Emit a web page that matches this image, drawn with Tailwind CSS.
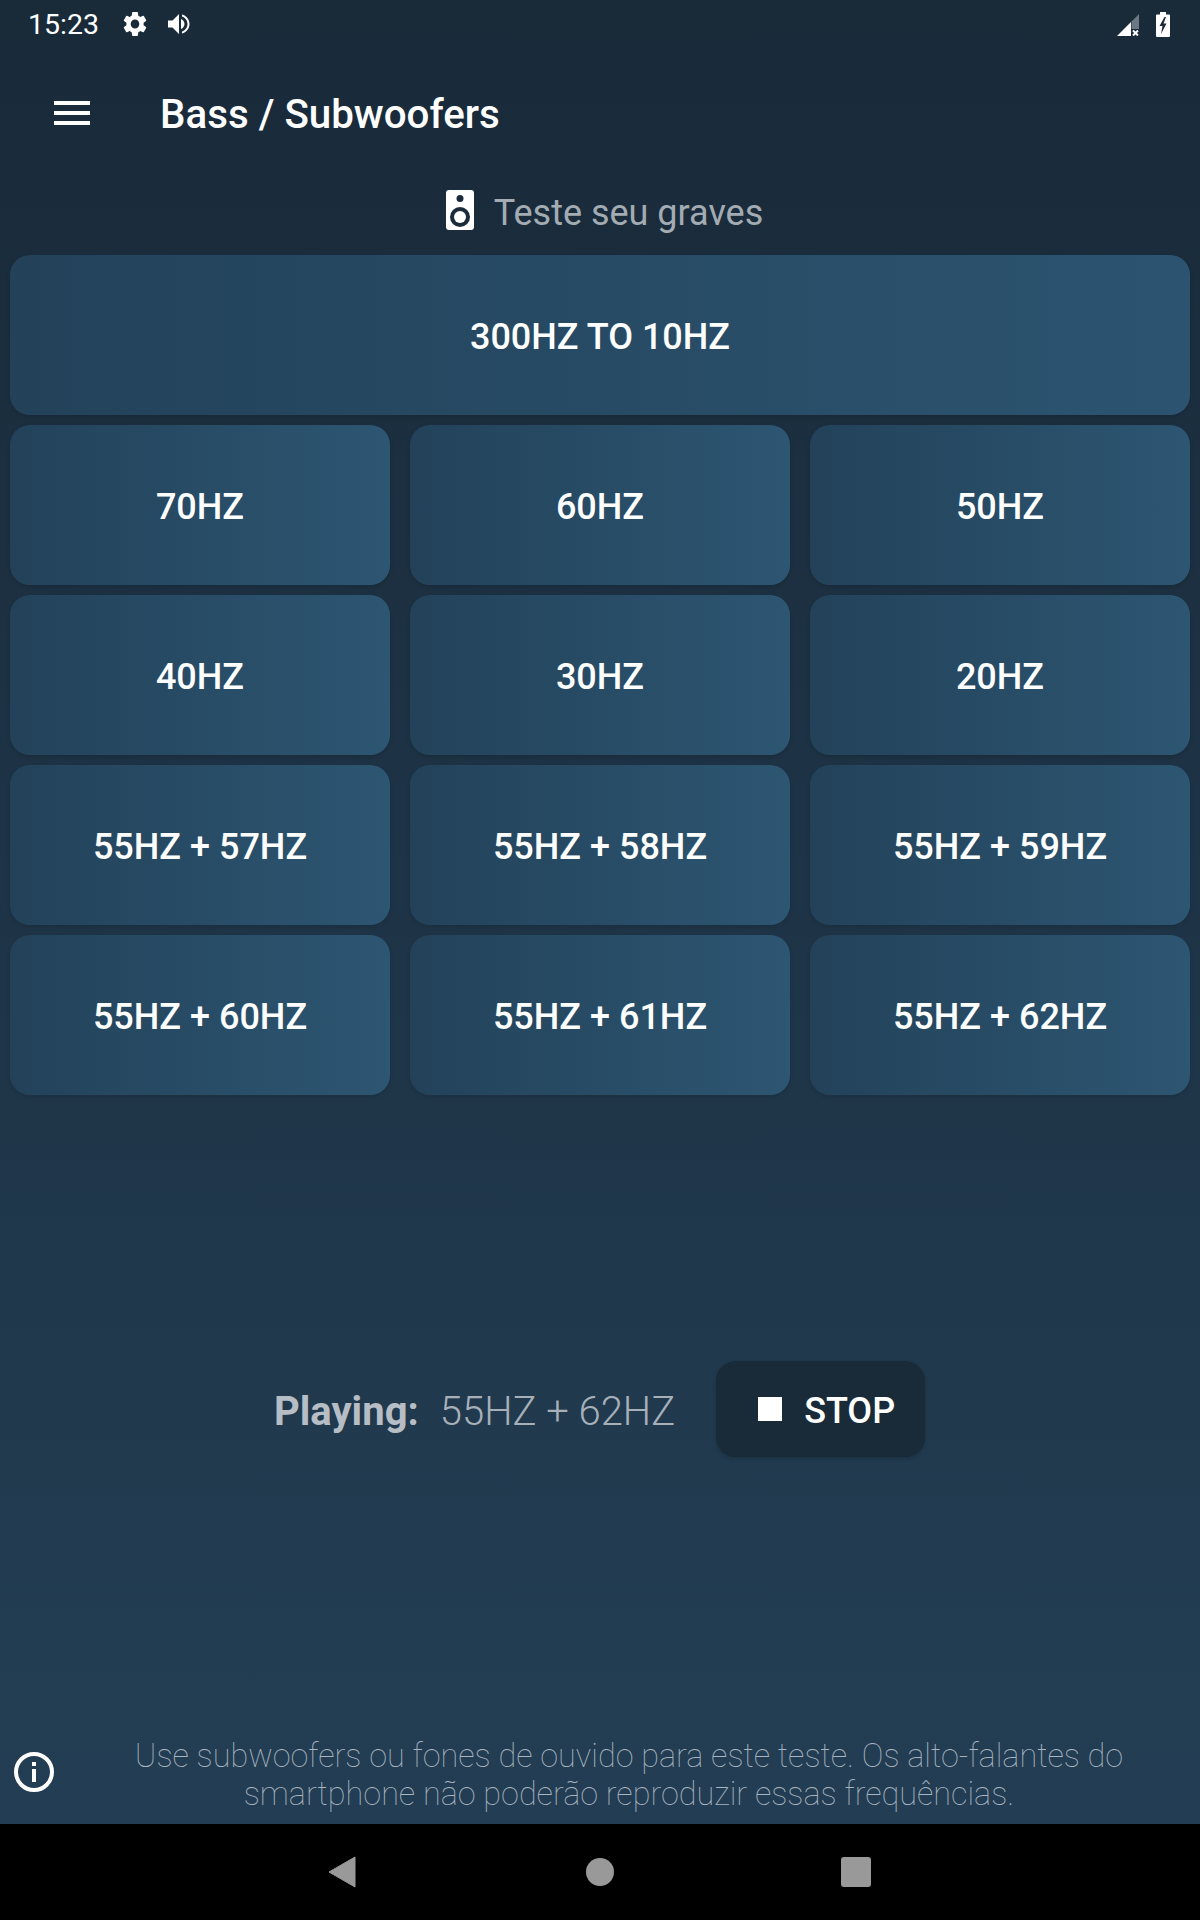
<!DOCTYPE html>
<html>
<head>
<meta charset="utf-8">
<script src="https://cdn.jsdelivr.net/npm/@tailwindcss/browser@4"></script>
</head>
<body class="m-0 bg-black">
<div class="w-[1200px] h-[1920px] flex flex-col font-['Roboto',sans-serif] overflow-hidden">
  <div class="h-[1824px] flex flex-col bg-gradient-to-b from-[#192a39] to-[#233e54]">
    <!-- status bar -->
    <div class="h-[48px] flex items-center pl-[28px] pr-[30px] text-white shrink-0">
      <span class="text-[28.500px] pt-[1px] leading-[48px] w-[95px]">15:23</span>
      <svg class="w-[24px] h-[26px]" viewBox="2 1.500 20 21" preserveAspectRatio="none" fill="#fff"><path d="M19.14 12.94c.04-.3.06-.61.06-.94s-.02-.64-.07-.94l2.03-1.58a.49.49 0 0 0 .12-.61l-1.92-3.32a.49.49 0 0 0-.59-.22l-2.39.96a7 7 0 0 0-1.62-.94l-.36-2.54a.48.48 0 0 0-.48-.41h-3.84a.48.48 0 0 0-.47.41l-.36 2.54a7.3 7.3 0 0 0-1.62.94l-2.39-.96a.48.48 0 0 0-.59.22L2.74 8.87a.47.47 0 0 0 .12.61l2.03 1.58c-.05.3-.09.63-.09.94s.02.64.07.94l-2.03 1.58a.49.49 0 0 0-.12.61l1.92 3.32c.12.22.37.29.59.22l2.39-.96c.5.38 1.03.7 1.62.94l.36 2.54c.05.24.24.41.48.41h3.84c.24 0 .44-.17.47-.41l.36-2.54a7 7 0 0 0 1.62-.94l2.39.96c.22.08.47 0 .59-.22l1.92-3.32a.47.47 0 0 0-.12-.61zM12 15.6A3.6 3.6 0 1 1 12 8.4a3.6 3.6 0 0 1 0 7.2z"/></svg>
      <svg class="w-[24px] h-[24px] ml-[20px]" viewBox="0 0 24 24" fill="#fff"><path d="M1 8.500v7h4.500l6.500 6.500V2L5.500 8.500H1z"/><path d="M14 7v10c2-.9 3.500-2.800 3.500-5S16 7.900 14 7z"/><path d="M15 2.500v2c3.100 1 5.500 4 5.500 7.500s-2.400 6.500-5.500 7.500v2c4.300-1 7.500-5 7.500-9.500S19.300 3.500 15 2.500z"/></svg>
      <div class="flex-1"></div>
      <svg class="w-[24px] h-[24px]" viewBox="0 0 24 24"><path d="M23 2V17H15.500V9.500Z" fill="#6b7782"/><path d="M1 24 L15 10 V24Z" fill="#fff"/><path d="M17 18.500l5 5M22 18.500l-5 5" stroke="#fff" stroke-width="2"/></svg>
      <svg class="w-[14px] h-[25px] ml-[16px]" viewBox="0 0 14 25"><path d="M4 0h6v2.500h3a1 1 0 0 1 1 1V24a1 1 0 0 1-1 1H1a1 1 0 0 1-1-1V3.500a1 1 0 0 1 1-1h3z" fill="#fff"/><path d="M8.500 5 L3.500 14 H6.500 L5 22 L10.500 11.500 H7.500 L10 5Z" fill="#192a3a"/></svg>
    </div>
    <!-- toolbar -->
    <div class="h-[130px] flex items-center pl-[54px] shrink-0">
      <div class="w-[36px] flex flex-col gap-[6px]">
        <div class="h-[4px] bg-white"></div>
        <div class="h-[4px] bg-white"></div>
        <div class="h-[4px] bg-white"></div>
      </div>
      <span class="ml-[70px] pt-[5px] text-[40.300px] font-medium text-white leading-none">Bass / Subwoofers</span>
    </div>
    <!-- heading -->
    <div class="h-[77px] flex items-start justify-center gap-[20px] pt-[12px] pl-[9px] shrink-0">
      <svg class="w-[28px] h-[40px]" viewBox="0 0 28 40"><rect width="28" height="40" rx="3" fill="#fff"/><circle cx="14" cy="8.500" r="3.500" fill="#1a2c3b"/><circle cx="14" cy="27" r="10" fill="#1a2c3b"/><circle cx="14" cy="27" r="6" fill="#fff"/></svg>
      <span class="text-[36px] leading-[40px] pt-[3px] text-[#a3abb3]">Teste seu graves</span>
    </div>
    <!-- buttons -->
    <div class="grid grid-cols-3 gap-x-[20px] gap-y-[10px] px-[10px] shrink-0 text-white text-[36px] font-medium *:pt-[3px]">
      <div class="col-span-3 h-[160px] rounded-[20px] flex items-center justify-center bg-gradient-to-r from-[#23425a] to-[#2c5470] shadow-[0_2px_4px_rgba(0,0,0,0.12)]">300HZ TO 10HZ</div>
      <div class="h-[160px] rounded-[20px] flex items-center justify-center bg-gradient-to-r from-[#23425a] to-[#2d5672] shadow-[0_2px_4px_rgba(0,0,0,0.12)]">70HZ</div>
      <div class="h-[160px] rounded-[20px] flex items-center justify-center bg-gradient-to-r from-[#23425a] to-[#2d5672] shadow-[0_2px_4px_rgba(0,0,0,0.12)]">60HZ</div>
      <div class="h-[160px] rounded-[20px] flex items-center justify-center bg-gradient-to-r from-[#23425a] to-[#2d5672] shadow-[0_2px_4px_rgba(0,0,0,0.12)]">50HZ</div>
      <div class="h-[160px] rounded-[20px] flex items-center justify-center bg-gradient-to-r from-[#23425a] to-[#2d5672] shadow-[0_2px_4px_rgba(0,0,0,0.12)]">40HZ</div>
      <div class="h-[160px] rounded-[20px] flex items-center justify-center bg-gradient-to-r from-[#23425a] to-[#2d5672] shadow-[0_2px_4px_rgba(0,0,0,0.12)]">30HZ</div>
      <div class="h-[160px] rounded-[20px] flex items-center justify-center bg-gradient-to-r from-[#23425a] to-[#2d5672] shadow-[0_2px_4px_rgba(0,0,0,0.12)]">20HZ</div>
      <div class="h-[160px] rounded-[20px] flex items-center justify-center bg-gradient-to-r from-[#23425a] to-[#2d5672] shadow-[0_2px_4px_rgba(0,0,0,0.12)]">55HZ + 57HZ</div>
      <div class="h-[160px] rounded-[20px] flex items-center justify-center bg-gradient-to-r from-[#23425a] to-[#2d5672] shadow-[0_2px_4px_rgba(0,0,0,0.12)]">55HZ + 58HZ</div>
      <div class="h-[160px] rounded-[20px] flex items-center justify-center bg-gradient-to-r from-[#23425a] to-[#2d5672] shadow-[0_2px_4px_rgba(0,0,0,0.12)]">55HZ + 59HZ</div>
      <div class="h-[160px] rounded-[20px] flex items-center justify-center bg-gradient-to-r from-[#23425a] to-[#2d5672] shadow-[0_2px_4px_rgba(0,0,0,0.12)]">55HZ + 60HZ</div>
      <div class="h-[160px] rounded-[20px] flex items-center justify-center bg-gradient-to-r from-[#23425a] to-[#2d5672] shadow-[0_2px_4px_rgba(0,0,0,0.12)]">55HZ + 61HZ</div>
      <div class="h-[160px] rounded-[20px] flex items-center justify-center bg-gradient-to-r from-[#23425a] to-[#2d5672] shadow-[0_2px_4px_rgba(0,0,0,0.12)]">55HZ + 62HZ</div>
    </div>
    <!-- playing -->
    <div class="mt-[266px] flex items-center pl-[274px] h-[96px] shrink-0">
      <span class="text-[40px] pt-[5px] font-bold text-[#b6bdc4]">Playing:</span>
      <span class="ml-[21px] text-[40px] pt-[5px] text-[#a7b0b9] font-light">55HZ + 62HZ</span>
      <div class="ml-[41px] w-[209px] h-[96px] rounded-[20px] bg-[#192a38] flex items-center pl-[42px] shadow-[0_2px_4px_rgba(0,0,0,0.15)]">
        <div class="w-[24px] h-[24px] bg-white"></div>
        <span class="ml-[22px] text-[36px] pt-[3px] font-medium text-white">STOP</span>
      </div>
    </div>
    <!-- footer -->
    <div class="flex-1"></div>
    <div class="flex items-center pl-[14px] pb-[11px] shrink-0">
      <svg class="w-[40px] h-[40px] shrink-0 mb-[2px]" viewBox="0 0 40 40"><circle cx="20" cy="20" r="18" fill="none" stroke="#fff" stroke-width="4"/><rect x="18" y="17" width="4" height="13" fill="#fff"/><rect x="18" y="10" width="4" height="4" fill="#fff"/></svg>
      <p class="ml-[70px] w-[1010px] pt-[4px] text-center text-[32.400px] leading-[38px] font-thin text-[#a9b5c0]">Use subwoofers ou fones de ouvido para este teste. Os alto-falantes do smartphone não poderão reproduzir essas frequências.</p>
    </div>
  </div>
  <!-- nav bar -->
  <div class="h-[96px] bg-black flex items-center shrink-0 pl-[328px]">
    <svg class="w-[28px] h-[32px]" viewBox="0 0 28 32"><path d="M27 1 V31 L1 16Z" fill="#999" stroke="#999" stroke-width="1" stroke-linejoin="round"/></svg>
    <div class="ml-[230px] w-[28px] h-[28px] rounded-full bg-[#999]"></div>
    <div class="ml-[227px] w-[30px] h-[30px] rounded-[3px] bg-[#999]"></div>
  </div>
</div>
</body>
</html>
